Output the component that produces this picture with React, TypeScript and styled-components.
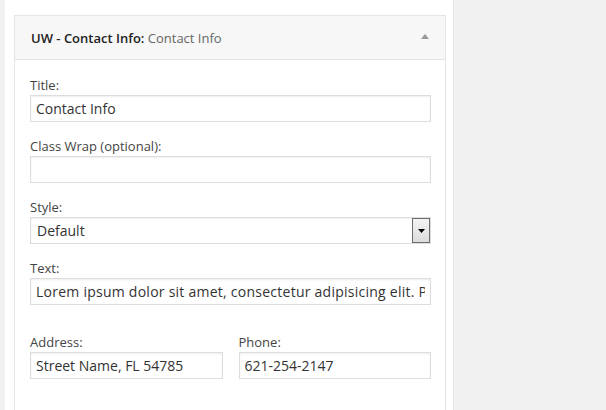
import React from "react";
import styled, { createGlobalStyle } from "styled-components";

const Global = createGlobalStyle`
  html, body { margin: 0; padding: 0; }
  body {
    background: #f1f1f1;
    font-family: "Open Sans", "Liberation Sans", sans-serif;
    color: #444;
    width: 606px;
    height: 410px;
    overflow: hidden;
  }
`;

const Page = styled.div`
  display: flex;
  height: 410px;
  padding-left: 5px;
`;

const Column = styled.div`
  width: 449px;
  background: #fff;
  border-right: 1px solid #e8e8e8;
  padding: 15px 0 0 9px;
  box-sizing: border-box;
`;

const Widget = styled.div`
  width: 432px;
  border: 1px solid #e5e5e5;
  border-bottom: none;
  box-sizing: border-box;
  height: 395px;
  background: #fff;
`;

const Header = styled.div`
  height: 43px;
  background: #f7f7f7;
  border-bottom: 1px solid #e5e5e5;
  display: flex;
  align-items: center;
  justify-content: space-between;
  padding: 0 16px 0 16px;
  font-size: 13px;
`;

const Title = styled.div`
  color: #222;
  font-weight: 600;
  span { font-weight: 400; color: #666; }
`;

const Toggle = styled.div`
  width: 0;
  height: 0;
  border-left: 4px solid transparent;
  border-right: 4px solid transparent;
  border-bottom: 5px solid #999;
  margin-top: -2px;
`;

const Body = styled.div`
  padding: 15px 14px 0 15px;
`;

const Field = styled.div<{ $gap?: number }>`
  margin-bottom: ${(p) => p.$gap ?? 14}px;
  flex: 1;
`;

const Label = styled.label`
  display: block;
  font-size: 13px;
  line-height: 20px;
  color: #444;
`;

const Input = styled.input<{ $spacing?: number }>`
  display: block;
  width: 100%;
  height: 27px;
  box-sizing: border-box;
  border: 1px solid #ddd;
  box-shadow: inset 0 1px 2px rgba(0, 0, 0, 0.07);
  background: #fff;
  padding: 0 5px;
  font-family: "Open Sans", "Liberation Sans", sans-serif;
  font-size: 14px;
  letter-spacing: ${(p) => p.$spacing ?? 0}px;
  color: #333;
  outline: none;
  margin: 0;
`;

const SelectBox = styled.div`
  position: relative;
  height: 27px;
  box-sizing: border-box;
  border: 1px solid #ddd;
  box-shadow: inset 0 1px 2px rgba(0, 0, 0, 0.07);
  display: flex;
  align-items: center;
  padding-left: 6px;
  font-size: 14px;
  color: #333;
`;

const DropButton = styled.div`
  position: absolute;
  right: 0;
  top: 0;
  width: 18px;
  height: 25px;
  box-sizing: border-box;
  border: 1px solid #6d6d6d;
  background: linear-gradient(#f4f4f4, #dcdcdc);
  display: flex;
  justify-content: center;
  padding-top: 10px;
`;

const Row = styled.div`
  display: flex;
  gap: 16px;
  margin-top: 27px;
`;

export default function App() {
  return (
    <>
      <Global />
      <Page>
        <Column>
          <Widget>
            <Header>
              <Title>
                UW - Contact Info: <span>Contact Info</span>
              </Title>
              <Toggle />
            </Header>
            <Body>
              <Field>
                <Label>Title:</Label>
                <Input readOnly defaultValue="Contact Info" />
              </Field>
              <Field>
                <Label>Class Wrap (optional):</Label>
                <Input readOnly defaultValue="" />
              </Field>
              <Field>
                <Label>Style:</Label>
                <SelectBox>
                  Default
                  <DropButton>
                    <svg width="7" height="4" viewBox="0 0 7 4">
                      <path d="M0 0h7L3.5 4z" fill="#000" />
                    </svg>
                  </DropButton>
                </SelectBox>
              </Field>
              <Field $gap={0}>
                <Label>Text:</Label>
                <Input
                  readOnly
                  $spacing={0.25}
                  defaultValue="Lorem ipsum dolor sit amet, consectetur adipisicing elit. Praesent"
                />
              </Field>
              <Row>
                <Field>
                  <Label>Address:</Label>
                  <Input readOnly defaultValue="Street Name, FL 54785" />
                </Field>
                <Field>
                  <Label>Phone:</Label>
                  <Input readOnly defaultValue="621-254-2147" />
                </Field>
              </Row>
            </Body>
          </Widget>
        </Column>
      </Page>
    </>
  );
}
